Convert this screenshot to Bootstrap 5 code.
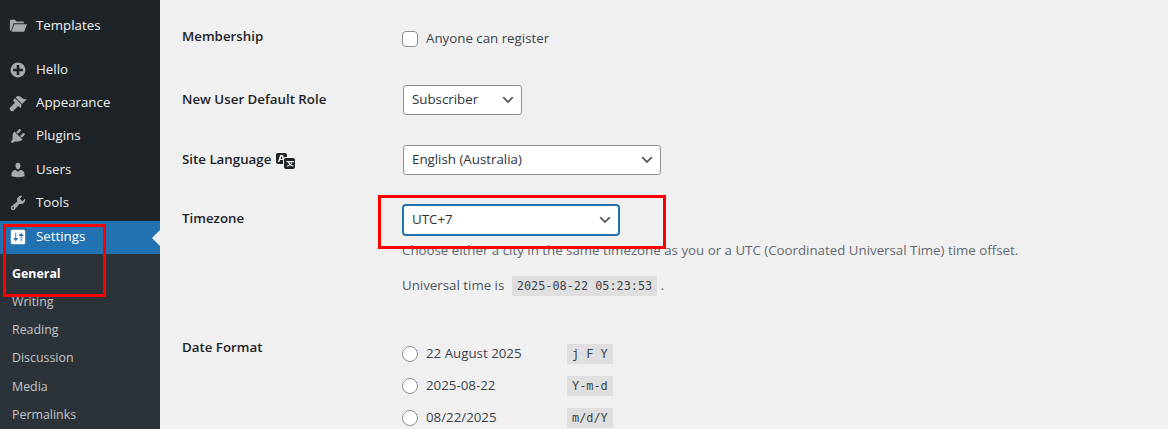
<!DOCTYPE html>
<html lang="en">
<head>
<meta charset="utf-8">
<title>General Settings</title>
<link rel="stylesheet" href="https://cdn.jsdelivr.net/npm/bootstrap@5.3.0/dist/css/bootstrap.min.css">
<style>
html,body{height:429px;overflow:hidden}
body{background:#f0f0f1;font-family:"Open Sans","Noto Sans",sans-serif;font-size:13.3px;color:#3c434a;position:relative}
.wp-shell{height:429px}
.wp-side{width:160px;background:#1d2327;flex:none;padding-top:9px}
.wp-item{height:34px;color:#f0f0f1;text-decoration:none;font-size:13.3px;padding-left:9px;position:relative}
.wp-item svg{width:18px;height:18px;fill:#a7aaad;flex:none;margin-right:9px}
.wp-gap{margin-top:11px}
.wp-item.wp-current{background:#2271b1;color:#fff;margin-top:1px}
.wp-item.wp-current svg{fill:#fff}
.wp-item.wp-current::after{content:"";position:absolute;right:0;top:9px;border:8px solid transparent;border-right-color:#f0f0f1;border-left:0}
.wp-sub{background:#2c3338;padding-top:6px;flex:1}
.wp-sub a{display:block;height:28.2px;line-height:28px;padding-left:12px;font-size:12.4px;color:#c3c4c7;text-decoration:none}
.wp-sub a.wp-on{color:#fff;font-weight:700}
.wp-main{padding:22px 0 0 22px}
.wp-row{display:flex}
.wp-label{width:220px;flex:none;color:#1d2327;font-weight:600;font-size:13.3px}
.wp-r1{height:30px;margin-bottom:33px}
.wp-r2{height:30px;margin-bottom:30px}
.wp-r3{height:30px;margin-bottom:30px}
.wp-r4{height:133px}
.form-select.wp-sel{height:30px;margin-left:1px;padding:0 24px 0 8px;font-size:13.3px;color:#2c3338;border:1px solid #8c8f94;border-radius:3px;background-color:#fff;background-size:16px 16px;background-position:right 5px top 50%;background-image:url("data:image/svg+xml,%3Csvg xmlns='http://www.w3.org/2000/svg' viewBox='0 0 20 20'%3E%3Cpath d='M5 6l5 5 5-5 2 1-7 7-7-7z' fill='%23555'/%3E%3C/svg%3E")}
.wp-sel-role{width:119px}
.wp-sel-lang{width:258px}
.form-select.wp-sel-tz{width:216px;border-color:#2271b1;box-shadow:0 0 0 1px #2271b1}
.form-check-input.wp-box{width:16px;height:16px;margin:0 8px 0 0;border:1px solid #8c8f94;background-color:#fff;flex:none}
.form-check-input.wp-box[type=checkbox]{border-radius:4px}
.wp-desc{color:#646970;font-size:13.3px;line-height:20px;margin:5px 0 0}
.wp-uni{font-size:13.3px;line-height:20px;margin:15px 0 0;color:#50575e}
.wp-code{font-family:"DejaVu Sans Mono","Liberation Mono",monospace;font-size:11.85px;line-height:20px;height:20px;display:inline-block;padding:0 5px;background:#dfdfdf;color:#3c434a}
.wp-opt{height:32px;color:#3c434a}
.wp-optname{width:141px;flex:none}
.wp-date{margin-top:43px}
.wp-mark{position:absolute;border:3px solid #f00;pointer-events:none}
.wp-mark-a{left:3px;top:224px;width:103px;height:73px}
.wp-mark-b{left:378px;top:195px;width:288px;height:54px}
.wp-tr{width:20px;height:20px;fill:#1d2327;vertical-align:-6px;margin-left:1px}
</style>
</head>
<body>
<div class="wp-shell d-flex">
  <nav class="wp-side d-flex flex-column">
    <a class="wp-item d-flex align-items-center" href="#"><svg viewBox="0 0 20 20"><path d="M1 4.5C1 3.7 1.6 3 2.4 3h4.2l1.8 2h7.2c.5 0 .9.4.9.9V7H5.2L2.6 14.5 1 15.6zM5.9 8H20l-3.1 8.4H2.6z"/></svg>Templates</a>
    <a class="wp-item wp-gap d-flex align-items-center" href="#"><svg viewBox="0 0 20 20"><path d="M15.8 4.2c3.2 3.21 3.2 8.39 0 11.6-3.21 3.2-8.39 3.2-11.6 0C1 12.59 1 7.41 4.2 4.2 7.41 1 12.59 1 15.8 4.2zm-4.3 11.3v-4h4v-3h-4v-4h-3v4h-4v3h4v4h3z"/></svg>Hello</a>
    <a class="wp-item d-flex align-items-center" href="#"><svg viewBox="0 0 20 20"><path d="M14.48 11.06L7.41 3.99l1.5-1.5c.5-.56 2.3-.47 3.51.32 1.21.8 1.43 1.28 2.91 2.1 1.18.64 2.45 1.26 4.45.85zm-.71.71L6.7 4.7 4.93 6.47c-.39.39-.39 1.02 0 1.41l1.06 1.06c.39.39.39 1.03 0 1.42L1.3 15c-.8.8-.8 2.1 0 2.9l.8.8c.8.8 2.1.8 2.9 0l4.6-4.7c.39-.39 1.03-.39 1.42 0l1.06 1.06c.39.39 1.02.39 1.41 0z"/></svg>Appearance</a>
    <a class="wp-item d-flex align-items-center" href="#"><svg viewBox="0 0 20 20"><path d="M13.11 4.36L9.87 7.6 8 5.73l3.24-3.24c.35-.34 1.05-.2 1.56.32.52.51.66 1.21.31 1.55zm-8 1.77l.91-1.12 9.01 9.01-1.19.84c-.71.71-2.63 1.16-3.82 1.16H6.14L4.9 17.26c-.59.59-1.54.59-2.12 0-.59-.58-.59-1.53 0-2.12l1.24-1.24v-3.88c0-1.13.4-3.19 1.09-3.89zm7.26 3.97l3.24-3.24c.34-.35 1.04-.21 1.55.31.52.51.66 1.21.31 1.55l-3.24 3.25z"/></svg>Plugins</a>
    <a class="wp-item d-flex align-items-center" href="#"><svg viewBox="0 0 20 20"><path d="M10 9.25c-2.27 0-2.73-3.44-2.73-3.44C7 4.02 7.82 2 9.97 2c2.16 0 2.98 2.02 2.71 3.81 0 0-.41 3.44-2.68 3.44zm0 2.57L12.72 10c2.39 0 4.52 2.33 4.52 4.53v2.49s-3.65 1.13-7.24 1.13c-3.65 0-7.24-1.13-7.24-1.13v-2.49c0-2.25 1.94-4.48 4.47-4.48z"/></svg>Users</a>
    <a class="wp-item d-flex align-items-center" href="#"><svg viewBox="0 0 20 20"><path fill-rule="evenodd" d="M16.68 9.77c-1.34 1.34-3.3 1.67-4.95.99l-5.41 6.52c-.99.99-2.59.99-3.58 0s-.99-2.59 0-3.57l6.52-5.42c-.68-1.65-.35-3.61.99-4.95 1.28-1.28 3.12-1.62 4.72-1.06l-2.89 2.89 2.82 2.82 2.86-2.87c.53 1.58.18 3.39-1.08 4.65zM3.81 16.21c.4.39 1.04.39 1.43 0 .4-.4.4-1.04 0-1.43-.39-.4-1.03-.4-1.43 0-.39.39-.39 1.03 0 1.43z"/></svg>Tools</a>
    <a class="wp-item wp-current d-flex align-items-center" href="#"><svg viewBox="0 0 20 20"><path fill-rule="evenodd" d="M18 16V4c0-1.1-.9-2-2-2H4c-1.1 0-2 .9-2 2v12c0 1.1.9 2 2 2h12c1.1 0 2-.9 2-2zM8 11h1c.55 0 1 .45 1 1s-.45 1-1 1H8v1.5c0 .28-.22.5-.5.5s-.5-.22-.5-.5V13H6c-.55 0-1-.45-1-1s.45-1 1-1h1V5.5c0-.28.22-.5.5-.5s.5.22.5.5V11zm5-2h-1c-.55 0-1-.45-1-1s.45-1 1-1h1V5.5c0-.28.22-.5.5-.5s.5.22.5.5V7h1c.55 0 1 .45 1 1s-.45 1-1 1h-1v5.5c0 .28-.22.5-.5.5s-.5-.22-.5-.5V9z"/></svg>Settings</a>
    <div class="wp-sub">
      <a class="wp-on" href="#">General</a>
      <a href="#">Writing</a>
      <a href="#">Reading</a>
      <a href="#">Discussion</a>
      <a href="#">Media</a>
      <a href="#">Permalinks</a>
    </div>
  </nav>
  <main class="wp-main flex-grow-1">
    <div class="wp-row wp-r1 align-items-center">
      <div class="wp-label">Membership</div>
      <div class="d-flex align-items-center pt-1">
        <input class="form-check-input wp-box" type="checkbox" id="reg"><label for="reg">Anyone can register</label>
      </div>
    </div>
    <div class="wp-row wp-r2 align-items-center">
      <div class="wp-label">New User Default Role</div>
      <select class="form-select wp-sel wp-sel-role"><option>Subscriber</option></select>
    </div>
    <div class="wp-row wp-r3 align-items-center">
      <div class="wp-label">Site Language <svg class="wp-tr" viewBox="0 0 20 20"><path d="M11 7H9.49c-.63 0-1.25.3-1.59.7L7 5H4.13l-2.39 7h1.69l.74-2H7v4H2c-1.1 0-2-.9-2-2V5c0-1.1.9-2 2-2h7c1.1 0 2 .9 2 2zM6.51 9H4.49l1-2.93z"/><path fill-rule="evenodd" d="M10 8h7c1.1 0 2 .9 2 2v7c0 1.1-.9 2-2 2h-7c-1.1 0-2-.9-2-2v-7c0-1.1.9-2 2-2zm.5 3v1.2h1.6c.3 1 .7 1.7 1.2 2.2-.8.6-1.7.9-2.8 1.1l.5 1.1c1.3-.2 2.3-.7 3.2-1.4.8.7 1.9 1.2 3.2 1.4l.5-1.1c-1.1-.2-2-.5-2.8-1.1.5-.5.9-1.2 1.2-2.2h1.6V11zm2.8 1.2h2.4c-.2.6-.6 1.2-1.2 1.5-.6-.3-1-.9-1.2-1.5z"/></svg></div>
      <select class="form-select wp-sel wp-sel-lang"><option>English (Australia)</option></select>
    </div>
    <div class="wp-row wp-r4">
      <div class="wp-label wp-lbl-tz pt-1">Timezone</div>
      <div>
        <select class="form-select wp-sel wp-sel-tz"><option>UTC+7</option></select>
        <p class="wp-desc">Choose either a city in the same timezone as you or a UTC (Coordinated Universal Time) time offset.</p>
        <p class="wp-uni">Universal time is <span class="wp-code ms-1">2025-08-22 05:23:53</span> .</p>
      </div>
    </div>
    <div class="wp-row">
      <div class="wp-label">Date Format</div>
      <div>
        <div class="wp-opt d-flex align-items-center"><input class="form-check-input wp-box" type="radio" name="df"><span class="wp-optname">22 August 2025</span><span class="wp-code">j F Y</span></div>
        <div class="wp-opt d-flex align-items-center"><input class="form-check-input wp-box" type="radio" name="df"><span class="wp-optname">2025-08-22</span><span class="wp-code">Y-m-d</span></div>
        <div class="wp-opt d-flex align-items-center"><input class="form-check-input wp-box" type="radio" name="df"><span class="wp-optname">08/22/2025</span><span class="wp-code">m/d/Y</span></div>
      </div>
    </div>
  </main>
</div>
<div class="wp-mark wp-mark-a"></div>
<div class="wp-mark wp-mark-b"></div>
<script src="https://cdn.jsdelivr.net/npm/bootstrap@5.3.0/dist/js/bootstrap.bundle.min.js"></script>
</body>
</html>
